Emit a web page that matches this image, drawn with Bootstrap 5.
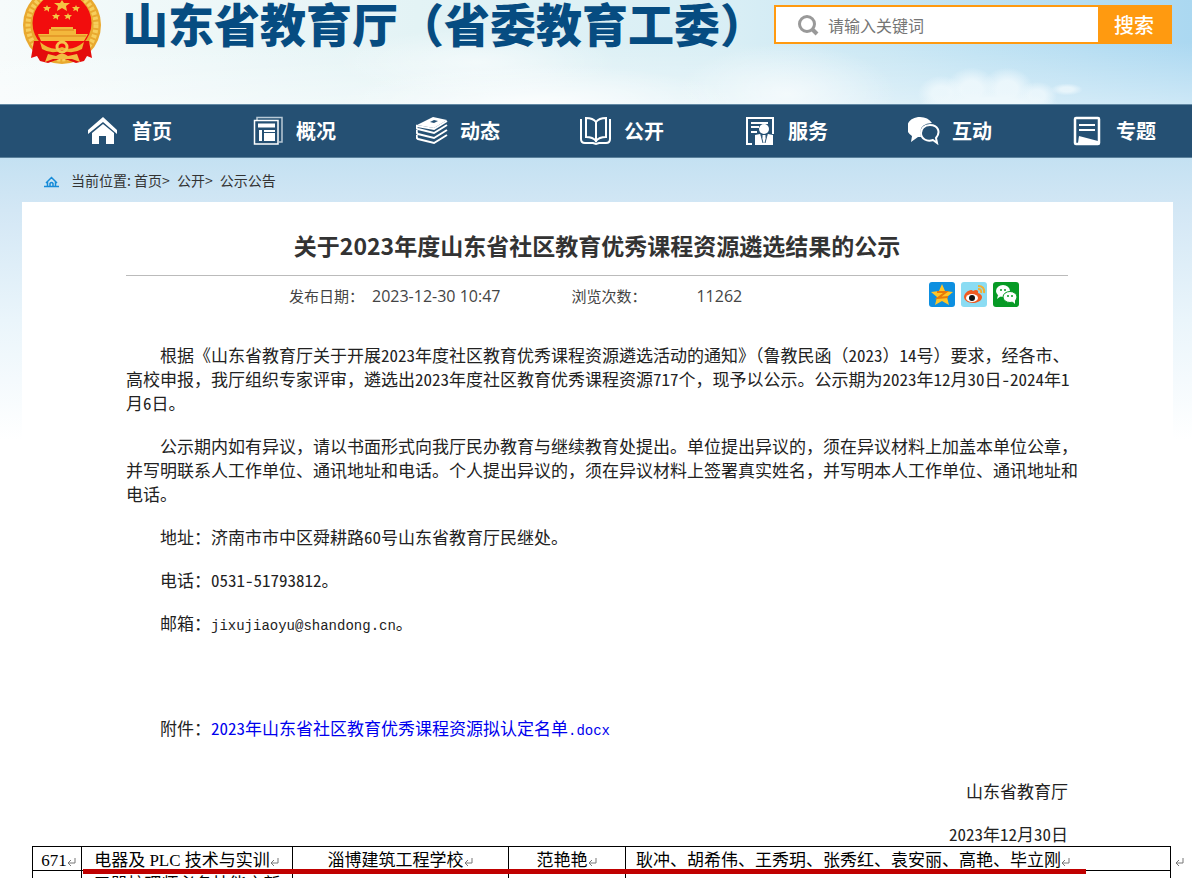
<!DOCTYPE html>
<html lang="zh-CN">
<head>
<meta charset="utf-8">
<meta name="viewport" content="width=device-width, initial-scale=1">
<title>关于2023年度山东省社区教育优秀课程资源遴选结果的公示</title>
<link href="https://cdn.jsdelivr.net/npm/bootstrap@5.3.0/dist/css/bootstrap.min.css" rel="stylesheet">
<style>
body{font-family:"Noto Sans CJK SC",sans-serif;color:#333;background:#fff linear-gradient(#c4e1f2 158px,#d3e7f5 210px,#eaf5fb 320px,#fff 440px) no-repeat;overflow-x:hidden}
a{color:inherit;text-decoration:none}
.site-head{height:104px;padding:0 20px 0 22px;
 background:
 radial-gradient(ellipse 70px 12px at 83% 100%,#eef8fc 50%,#eef8fc00),
 radial-gradient(ellipse 24px 18px at 79% 90%,#f2fafdbb 40%,#f2fafd00),
 radial-gradient(ellipse 26px 22px at 81.5% 86%,#f2fafdcc 40%,#f2fafd00),
 radial-gradient(ellipse 26px 22px at 84.5% 86%,#f2fafdcc 40%,#f2fafd00),
 radial-gradient(ellipse 20px 14px at 87% 92%,#f2fafdbb 40%,#f2fafd00),
 radial-gradient(ellipse 16px 6px at 89.5% 86%,#eef8fccc 40%,#eef8fc00),
 radial-gradient(ellipse 110px 50px at 66% 90%,#fff9,#fff0),
 radial-gradient(ellipse 200px 40px at 45% 100%,#fffc,#fff0),
 radial-gradient(ellipse 140px 34px at 40% 60%,#fff8,#fff0),
 linear-gradient(#fff0 40%,#ffffff66),
 linear-gradient(90deg,#f6fbfb,#e3f3f5 35%,#d8eef5 62%,#bfe2f3 82%,#abd8f1)}
.emblem{width:80px;height:66px}
.site-title{font-size:46px;font-weight:900;line-height:44px;color:#064c81;margin-left:20px;white-space:nowrap}
.finder{width:398px;height:39px;margin-top:5px;border:2px solid #ff9a10;background:#fff}
.finder input{font-size:16px;border:0;background:none;min-width:0;outline:0;color:#555}
.finder input::placeholder{color:#757575;opacity:1}
.finder button{width:72px;background:#ff9a10;color:#fff;font-size:20px;line-height:35px;border:0;font-weight:500}
.main-nav{background:#255073;border-top:1px solid #6389a4;border-bottom:1px solid #5a809b;height:54px;padding-left:44px}
.main-nav ul{display:grid;grid-template-columns:repeat(7,1fr);height:100%}
.main-nav a{padding-left:44px;gap:12px;color:#fff;font-size:20px;font-weight:700;white-space:nowrap;height:100%}
.main-nav svg{width:32px;height:32px;flex:none}
.crumbs{height:44px;padding-left:44px;font-size:14px;line-height:44px;color:#333}
.sheet{margin:0 19px 0 22px;background:#fff}
.article{padding:26px 105px 0 104px}
.headline{font-size:23px;line-height:34px;font-weight:700;color:#333;margin:0;padding-bottom:13px;border-bottom:1px solid #bbb}
.facts{font-size:15px;height:40px;padding:0 49px 0 163px;color:#444}
.facts time,.facts output{font-family:"Open Sans",sans-serif;font-size:16px}
.facts time{margin:0 71px 0 8px}
.facts output{margin-left:50px}
.facts svg{width:26px;height:25px}
.prose{font-size:17px;line-height:24px;margin:27px -14px 0 0;color:#222}
.prose p{margin:0 0 19px;text-indent:2em}
.prose .attachment{margin-top:80px}
.num{font-feature-settings:"hwid"}
.latin{font-family:"Liberation Mono",monospace;font-size:14px;line-height:20px}
.file-link{color:#00e}
.signed{font-size:17px;line-height:24px;margin-top:38px;color:#222;text-align:right}
.signed div+div{margin-top:19px}
.roster-wrap{padding:0 2px 0 10px;position:relative;height:32px;overflow:hidden;margin-right:-12px}
.roster{width:calc(100% - 12px);table-layout:fixed;color:#000;font-family:"Liberation Serif","Noto Sans CJK SC",sans-serif;font-size:17px;line-height:18px;border-collapse:collapse}
.roster td{border:1px solid #000;padding:5px 0 0;text-align:center;white-space:nowrap;height:23px;line-height:18px}
.roster td:last-child{text-align:left;padding-left:10px}
.ret{width:10px;height:11px;fill:none;stroke:#777}
.redline{position:absolute;left:61px;width:1003px;top:23px;height:5px;background:#c00000}
.ret-end{position:absolute;right:0;top:11px}
</style>
</head>
<body>
<header class="site-head d-flex align-items-start">
<svg class="emblem flex-shrink-0" viewBox="0 0 80 66" aria-hidden="true">
<circle cx="40" cy="25" r="39" fill="#e9a92f"/><circle cx="40" cy="25" r="34" fill="none" stroke="#f7ce5b" stroke-width="5" stroke-dasharray="3 2"/>
<path d="M12 41L9 58l6-2 3 5 8 2 14-5 14 5 8-2 3-5 5 2-3-17z" fill="#e40c0c"/>
<circle cx="40" cy="23" r="29.500" fill="#f20d0d"/>
<path d="M16 34h11v-5h2v-2h22v2h3v5h12l-4 7H19z" fill="#f3b83c"/><path d="M16 36h48M29 30h23" stroke="#d98018"/>
<path d="M18 42q12 10 22 5 10 5 22-5l-2 7q-10 6-20 1-10 5-20-1z" fill="#f0b535"/>
<path d="M23 62l3-8 8 2q6-5 12 0l9-2 3 8-8-3H31z" fill="#f3bd43"/><circle cx="40" cy="47" r="5" fill="none" stroke="#f5c54c" stroke-width="3"/>
<g fill="#f4c443"><path d="M40 0l2 3h6l-4 3 1 5-5-3-5 3 1-5-4-3h6z"/><path d="M25 5l1 2h3l-2 2v3l-2-2-3 1 1-2-2-2h3z"/><path d="M54 5l1 2h3l-2 2v3l-2-2-3 1 1-2-2-2h3z"/><path d="M34 13l1 2h3l-2 2v3l-2-2-3 1 1-2-2-2h3z"/><path d="M46 13l1 2h3l-2 2v3l-2-2-3 1 1-2-2-2h3z"/></g>
</svg>
<div class="site-title">山东省教育厅（省委教育工委）</div>
<form class="finder d-flex align-items-stretch ms-auto flex-shrink-0" role="search" onsubmit="return false">
<label for="kw" class="d-flex align-items-center ps-3 ms-1" aria-label="关键词"><svg width="24" height="24" viewBox="0 0 24 24" fill="none" stroke="#999"><circle cx="11" cy="11" r="7.500" stroke-width="3"/><path d="M16 16l5 5" stroke-width="4"/></svg></label>
<input id="kw" class="flex-grow-1 ps-2 pe-0 py-0" type="text" placeholder="请输入关键词">
<button type="submit" class="p-0">搜索</button>
</form>
</header>
<nav class="main-nav">
<ul class="list-unstyled m-0">
<li><a href="#" class="d-flex align-items-center"><svg viewBox="0 0 32 32" fill="#fff"><path d="M15 2L0 15v4L15 7l14 12v-4z"/><path d="M15 9L4 18v11h7v-8h7v8h8V18z"/></svg>首页</a></li>
<li><a href="#" class="d-flex align-items-center"><svg viewBox="0 0 32 32" fill="none" stroke="#fff"><path d="M5 5V2.500h25V27h-3" stroke="#b9c9d6" stroke-width="1.500"/><path d="M2.500 5.500H26V29H2.500z" stroke-width="1.500"/><path d="M6 10.500h17" stroke-width="4"/><path d="M8.500 15v11" stroke-width="3"/><path d="M12 15h11v11H12z" fill="#fff" stroke="none"/><path d="M12 17.500h11" stroke="#255073"/></svg>概况</a></li>
<li><a href="#" class="d-flex align-items-center"><svg viewBox="0 0 32 32" fill="none" stroke="#fff" stroke-width="2"><path d="M1 10L17 2l14 3-13 8z" fill="#fff" stroke="none"/><path d="M14 7l4-2 4 1-4 2z" fill="#255073" stroke="none"/><path d="M1 10q-2 3 1 4l16 4 13-8M1 15q-1 3 1 4l16 4 13-8M1 20q-1 3 1 4l16 4 13-8M1 11l17 3 13-8"/></svg>动态</a></li>
<li><a href="#" class="d-flex align-items-center"><svg viewBox="0 0 32 32" fill="none" stroke="#fff" stroke-width="2"><path d="M1 4v20q0 4 4 4h8l3 1 3-1h7q4 0 4-4V4"/><path d="M6 3q7 0 10 4 3-4 10-4v19q-7 0-10 4-3-4-10-4zM16 7v20"/></svg>公开</a></li>
<li><a href="#" class="d-flex align-items-center"><svg viewBox="0 0 32 32" fill="none" stroke="#fff" stroke-width="2"><path d="M8 29H3V3h26v16M7 8h17M7 12h8M7 17h6"/><path d="M11 30V20l5-1 4 6 4-6 5 1v10z" fill="#fff" stroke="none"/><circle cx="20" cy="14" r="5" fill="#fff" stroke="none"/><path d="M20 20v8" stroke-width="3"/><path d="M17 20l2 8M23 20l-2 8" stroke="#255073" stroke-width="1"/></svg>服务</a></li>
<li><a href="#" class="d-flex align-items-center"><svg viewBox="0 0 32 32" fill="#fff"><path d="M12 2C5 2-1 6-1 13q0 5 5 8l-1 6 7-5h3Q9 9 24 8 20 2 12 2z"/><path d="M22 10c-6 0-9 4-9 8 0 6 6 9 12 7l4 3-1-5c5-6 2-13-6-13z" fill="none" stroke="#fff" stroke-width="2"/></svg>互动</a></li>
<li><a href="#" class="d-flex align-items-center"><svg viewBox="0 0 32 32" fill="none" stroke="#fff" stroke-width="2"><rect x="3" y="3" width="24" height="26" rx="1" stroke-width="2.500"/><path d="M7 10h16M7 15h16"/><path d="M6 28l1-7 19 5v3z" fill="#fff" stroke="none"/></svg>专题</a></li>
</ul>
</nav>
<div class="crumbs d-flex align-items-center">
<svg width="15" height="12" viewBox="0 0 15 12" class="me-2 mt-1" fill="none" stroke="#168bd8"><path d="M0 10.500h15M2 7l5.500-5.500L13 7M3.500 6v4M11.500 6v4M6 10V7.500q1.500-2 3 0V10" stroke-width="1.500"/></svg>
<span class="ms-1">当前位置: <a href="#">首页</a>&gt; <a href="#" class="ms-1">公开</a>&gt; <a href="#" class="ms-1">公示公告</a></span>
</div>
<main class="sheet">
<article class="article">
<h1 class="headline text-center">关于2023年度山东省社区教育优秀课程资源遴选结果的公示</h1>
<div class="facts d-flex align-items-center">
<span>发布日期：</span><time>2023-12-30 10:47</time><span>浏览次数：</span><output>11262</output>
<div class="d-flex ms-auto mb-1" style="gap:6px">
<a href="#" class="d-flex" aria-label="QQ空间"><svg viewBox="0 0 26 25"><rect width="26" height="25" rx="3" fill="#0d8fe0"/><path d="M13 2l3 7 8 1-6 5 2 8-7-4-7 4 2-8-6-5 8-1z" fill="#ffc527"/><path d="M8 10h9l-8 6 10-1" fill="none" stroke="#e8790b" stroke-width="2"/></svg></a>
<a href="#" class="d-flex" aria-label="微博"><svg viewBox="0 0 26 25"><rect width="26" height="25" rx="3" fill="#8bdcf3"/><path d="M3 15c0-4 7-9 9-6 3-2 6-1 5 2 8 3 3 10-5 10-5 0-9-3-9-6z" fill="#ef5a20"/><ellipse cx="11" cy="16" rx="6" ry="4" fill="#fff"/><circle cx="11" cy="16" r="3" fill="#111"/><path d="M17 4q7 0 6 7M17 7q4 0 3 4" fill="none" stroke="#f3ae32" stroke-width="2"/></svg></a>
<a href="#" class="d-flex" aria-label="微信"><svg viewBox="0 0 26 25"><rect width="26" height="25" rx="3" fill="#079a25"/><ellipse cx="10" cy="9" rx="7" ry="6" fill="#fff"/><path d="M5 13l-1 4 4-3z" fill="#fff"/><ellipse cx="17" cy="15" rx="7" ry="5.500" fill="#fff" stroke="#079a25"/><path d="M19 19l3 3v-5z" fill="#fff"/><g fill="#079a25"><circle cx="8" cy="8" r="1"/><circle cx="12" cy="8" r="1"/><circle cx="15" cy="14" r="1"/><circle cx="19" cy="14" r="1"/></g></svg></a>
</div>
</div>
<div class="prose">
<p>根据《山东省教育厅关于开展<span class="num">2023</span>年度社区教育优秀课程资源遴选活动的通知》（鲁教民函（<span class="num">2023</span>）<span class="num">14</span>号）要求，经各市、<br>高校申报，我厅组织专家评审，遴选出<span class="num">2023</span>年度社区教育优秀课程资源<span class="num">717</span>个，现予以公示。公示期为<span class="num">2023</span>年<span class="num">12</span>月<span class="num">30</span>日<span class="num">-2024</span>年<span class="num">1</span><br>月<span class="num">6</span>日。</p>
<p>公示期内如有异议，请以书面形式向我厅民办教育与继续教育处提出。单位提出异议的，须在异议材料上加盖本单位公章，<br>并写明联系人工作单位、通讯地址和电话。个人提出异议的，须在异议材料上签署真实姓名，并写明本人工作单位、通讯地址和<br>电话。</p>
<p>地址：济南市市中区舜耕路<span class="num">60</span>号山东省教育厅民继处。</p>
<p>电话：<span class="num">0531-51793812</span>。</p>
<p>邮箱：<span class="latin">jixujiaoyu@shandong.cn</span>。</p>
<p class="attachment">附件：<a href="#" class="file-link"><span class="num">2023</span>年山东省社区教育优秀课程资源拟认定名单<span class="latin">.docx</span></a></p>
</div>
<div class="signed"><div>山东省教育厅</div><div><span class="num">2023</span>年<span class="num">12</span>月<span class="num">30</span>日</div></div>
</article>
<div class="roster-wrap">
<table class="roster">
<colgroup><col style="width:49px"><col style="width:211px"><col style="width:216px"><col style="width:117px"><col></colgroup>
<tr><td class="ps-1">671<svg class="ret"><path d="M8 1v5H1M4 3L1 6l3 3"/></svg></td><td>电器及 PLC 技术与实训<svg class="ret"><path d="M8 1v5H1M4 3L1 6l3 3"/></svg></td><td>淄博建筑工程学校<svg class="ret"><path d="M8 1v5H1M4 3L1 6l3 3"/></svg></td><td>范艳艳<svg class="ret"><path d="M8 1v5H1M4 3L1 6l3 3"/></svg></td><td>耿冲、胡希伟、王秀玥、张秀红、袁安丽、高艳、毕立刚<svg class="ret"><path d="M8 1v5H1M4 3L1 6l3 3"/></svg></td></tr>
<tr><td></td><td>三器护理师必备技能之新</td><td></td><td></td><td></td></tr>
</table>
<div class="redline"></div>
<svg class="ret ret-end"><path d="M8 1v5H1M4 3L1 6l3 3"/></svg>
</div>
</main>
<script src="https://cdn.jsdelivr.net/npm/bootstrap@5.3.0/dist/js/bootstrap.bundle.min.js"></script>
</body>
</html>
